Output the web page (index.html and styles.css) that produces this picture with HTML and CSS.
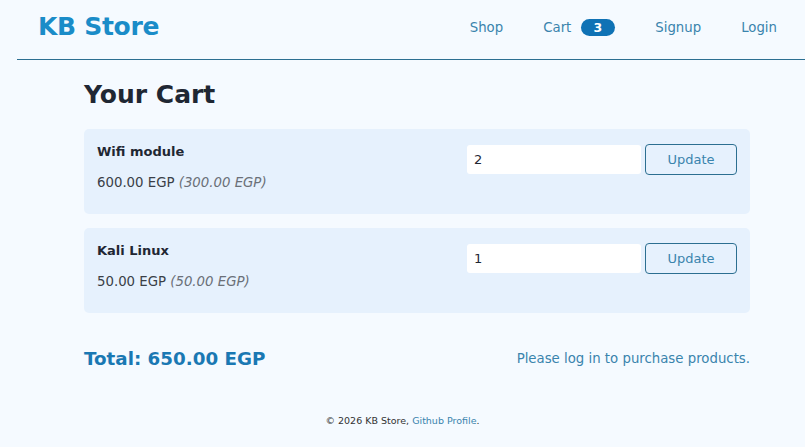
FILE: index.html
```html
<!DOCTYPE html>
<html lang="en">
<head>
    <meta charset="UTF-8">
    <meta name="viewport" content="width=device-width, initial-scale=1.0">
    <title>KB Store - Cart</title>
    <link rel="stylesheet" href="styles.css">
</head>
<body>
    <nav class="navbar">
        <a class="brand" href="#">KB Store</a>
        <ul class="nav-links">
            <li><a href="#">Shop</a></li>
            <li><a href="#">Cart <span class="badge">3</span></a></li>
            <li><a href="#">Signup</a></li>
            <li><a href="#">Login</a></li>
        </ul>
    </nav>

    <main class="container">
        <h1 class="page-title">Your Cart</h1>

        <div class="cart-item">
            <div class="item-info">
                <p class="item-name">Wifi module</p>
                <p class="item-price">600.00 EGP <em>(300.00 EGP)</em></p>
            </div>
            <form class="item-form">
                <input type="number" class="qty-input" value="2">
                <button type="button" class="update-btn">Update</button>
            </form>
        </div>

        <div class="cart-item">
            <div class="item-info">
                <p class="item-name">Kali Linux</p>
                <p class="item-price">50.00 EGP <em>(50.00 EGP)</em></p>
            </div>
            <form class="item-form">
                <input type="number" class="qty-input" value="1">
                <button type="button" class="update-btn">Update</button>
            </form>
        </div>

        <div class="cart-footer">
            <h2 class="total">Total: 650.00 EGP</h2>
            <p class="login-note">Please log in to purchase products.</p>
        </div>
    </main>

    <footer class="footer">
        &copy; 2026 KB Store, <a href="#">Github Profile</a>.
    </footer>
</body>
</html>
```

FILE: styles.css
```css
body {
    font-family: "DejaVu Sans", "Open Sans", sans-serif;
    margin: 0;
    padding: 0;
    background-color: #f5faff;
    color: #1f2733;
}

a {
    text-decoration: none;
}

.navbar {
    display: flex;
    align-items: center;
    justify-content: space-between;
    height: 60px;
    box-sizing: border-box;
    margin-left: 17px;
    padding: 0 28px 6px 21px;
    border-bottom: 1px solid #2c6f91;
}

.brand {
    font-size: 25px;
    font-weight: bold;
    color: #1a8cc8;
    letter-spacing: -0.3px;
}

.nav-links {
    display: flex;
    gap: 40px;
    list-style: none;
    margin: 0;
    padding: 0;
}

.nav-links a {
    font-size: 13.3px;
    color: #3a84ad;
}

.badge {
    display: inline-block;
    margin-left: 5px;
    padding: 1px 13px;
    border-radius: 10px;
    background-color: #0f72b5;
    color: #fff;
    font-size: 12.5px;
    font-weight: bold;
}

.container {
    width: 666px;
    margin-left: 84px;
    padding-top: 20px;
}

.page-title {
    margin: 0 0 20px;
    font-size: 25px;
    color: #1f2733;
}

.cart-item {
    display: flex;
    justify-content: space-between;
    align-items: flex-start;
    height: 85px;
    box-sizing: border-box;
    padding: 15px 13px;
    margin-bottom: 14px;
    background-color: #e6f1fd;
    border-radius: 5px;
}

.item-name {
    margin: 0;
    font-size: 13px;
    font-weight: bold;
    color: #1f2733;
}

.item-price {
    margin: 16px 0 0;
    font-size: 13.3px;
    color: #3a3f47;
}

.item-price em {
    color: #6b7078;
}

.item-form {
    display: flex;
    align-items: center;
    gap: 4px;
}

.qty-input {
    width: 174px;
    height: 29px;
    box-sizing: border-box;
    padding: 0 7px;
    border: none;
    border-radius: 3px;
    background: #fff;
    font-family: inherit;
    font-size: 13px;
    color: #1f2733;
}

.qty-input::-webkit-inner-spin-button {
    -webkit-appearance: none;
}

.update-btn {
    width: 92px;
    height: 31px;
    border: 1px solid #2c6f91;
    border-radius: 4px;
    background: transparent;
    font-family: inherit;
    font-size: 13px;
    color: #3a84ad;
    cursor: pointer;
}

.cart-footer {
    display: flex;
    justify-content: space-between;
    align-items: center;
    margin-top: 35px;
}

.total {
    margin: 0;
    font-size: 18.3px;
    color: #1a78b3;
}

.login-note {
    margin: 0;
    font-size: 13.3px;
    color: #3a84ad;
}

.footer {
    margin-top: 46px;
    text-align: center;
    font-size: 9.5px;
    color: #333;
}

.footer a {
    color: #3a84ad;
}
```
